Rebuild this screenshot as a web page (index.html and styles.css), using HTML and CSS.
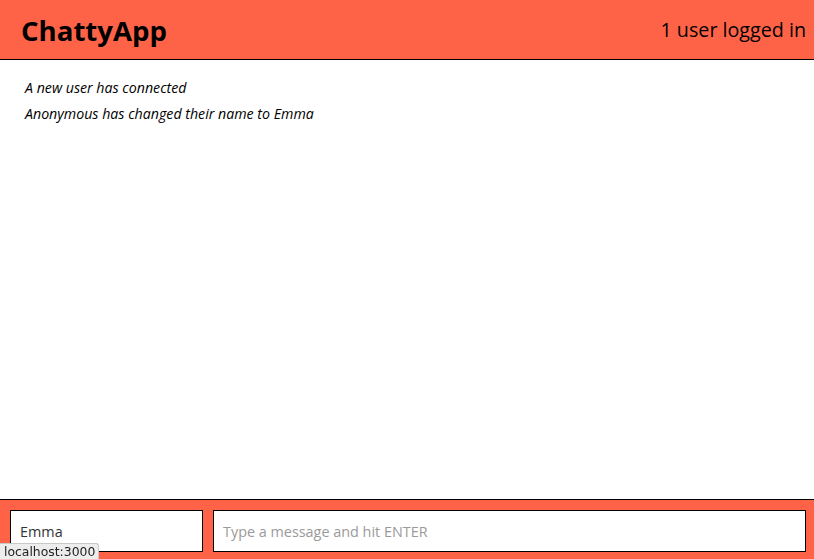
FILE: index.html
```html
<!DOCTYPE html>
<html lang="en">
<head>
<meta charset="utf-8">
<title>ChattyApp</title>
<link rel="stylesheet" href="styles.css">
</head>
<body>
<div class="app">
  <nav class="navbar">
    <span class="brand">ChattyApp</span>
    <span class="users">1 user logged in</span>
  </nav>
  <main class="messages">
    <div class="notification">A new user has connected</div>
    <div class="notification">Anonymous has changed their name to Emma</div>
  </main>
  <footer class="chatbar">
    <input class="chatbar-username" value="Emma">
    <input class="chatbar-message" placeholder="Type a message and hit ENTER" autofocus>
  </footer>
</div>
<div class="statusbar">localhost:3000</div>
</body>
</html>
```
FILE: styles.css
```css
html, body {
  margin: 0;
  padding: 0;
  height: 100%;
}
body {
  font-family: "Open Sans", "DejaVu Sans", sans-serif;
  color: #000;
  background: #fff;
}
.app {
  display: flex;
  flex-direction: column;
  height: 100%;
}
.navbar {
  flex: 0 0 auto;
  height: 59px;
  background: #ff6347;
  border-bottom: 1px solid #000;
  display: flex;
  align-items: center;
  justify-content: space-between;
  padding: 0 8px 0 21px;
}
.brand {
  font-weight: 700;
  font-size: 27.6px;
}
.users {
  font-size: 19.7px;
}
.messages {
  flex: 1 1 auto;
  padding: 15px 25px;
}
.notification {
  font-style: italic;
  font-size: 14.2px;
  line-height: 26px;
}
.chatbar {
  flex: 0 0 auto;
  box-sizing: border-box;
  height: 60px;
  background: #ff6347;
  border-top: 1px solid #000;
  display: flex;
  gap: 10px;
  padding: 10px 8px 7px 10px;
}
.chatbar input {
  box-sizing: border-box;
  height: 42px;
  border: 1px solid #000;
  border-radius: 0;
  background: #fff;
  margin: 0;
  padding: 0 9px;
  font-family: "Open Sans", "DejaVu Sans", sans-serif;
  font-size: 14.4px;
  color: #333;
  outline: none;
}
.chatbar-username {
  flex: 0 0 193px;
  width: 193px;
}
.chatbar-message {
  flex: 1 1 auto;
  min-width: 0;
}
.chatbar-message::placeholder {
  color: #9a9a9a;
}
.statusbar {
  position: fixed;
  left: 0;
  bottom: 0;
  background: #ededed;
  border: 1px solid #c8c8c8;
  border-left: none;
  border-bottom: none;
  border-top-right-radius: 3px;
  padding: 0 3px 0 4px;
  font-family: "DejaVu Sans", sans-serif;
  font-size: 12.4px;
  line-height: 15px;
  color: #222;
}
```
